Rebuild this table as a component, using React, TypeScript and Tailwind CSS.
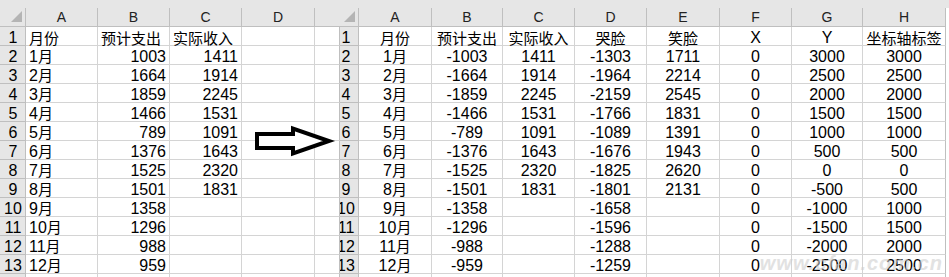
import type { ReactNode } from "react";

type Align = "l" | "r" | "c";

const months = ["1月", "2月", "3月", "4月", "5月", "6月", "7月", "8月", "9月", "10月", "11月", "12月"];
const plan = [1003, 1664, 1859, 1466, 789, 1376, 1525, 1501, 1358, 1296, 988, 959];
const actual = [1411, 1914, 2245, 1531, 1091, 1643, 2320, 1831];
const cry = [-1303, -1964, -2159, -1766, -1089, -1676, -1825, -1801, -1658, -1596, -1288, -1259];
const smile = [1711, 2214, 2545, 1831, 1391, 1943, 2620, 2131];
const ys = [3000, 2500, 2000, 1500, 1000, 500, 0, -500, -1000, -1500, -2000, -2500];

const cellFont =
  "font-['Liberation_Sans_Narrow','Liberation_Sans','Noto_Sans_CJK_SC',sans-serif] text-[16px] leading-[14px] text-black";

const Cell = ({
  children,
  align = "l",
  last = false,
}: {
  children?: ReactNode;
  align?: Align;
  last?: boolean;
}) => {
  const justify =
    align === "r" ? "justify-end pr-[3px]" : align === "c" ? "justify-center" : "justify-start pl-[3px]";
  return (
    <div
      className={`flex h-[19px] items-end whitespace-nowrap border-b border-[#d4d4d4] ${
        last ? "border-r border-r-[#bfbfbf]" : "border-r"
      } ${justify} ${cellFont}`}
    >
      {children}
    </div>
  );
};

const Cjk = ({ children }: { children: ReactNode }) => (
  <span className="font-['Noto_Sans_CJK_SC',sans-serif] text-[15px] leading-[14px]">{children}</span>
);

// "1月" -> number part in narrow face, 月 in CJK face
const Month = ({ m }: { m: string }) => (
  <span>
    {m.slice(0, -1)}
    <Cjk>月</Cjk>
  </span>
);

const RowHead = ({ n, cropped = false }: { n: number | string; cropped?: boolean }) => (
  <div className="flex h-[19px] items-end overflow-hidden border-b border-r border-[#bfbfbf] bg-[#e6e6e6]">
    <div
      className={`flex w-[26px] shrink-0 justify-center text-[#222] ${cellFont} ${
        cropped ? "-ml-[7px]" : ""
      }`}
    >
      {n}
    </div>
  </div>
);

const ColHead = ({ label, border = true }: { label?: string; border?: boolean }) => (
  <div
    className={`flex h-[19px] items-center justify-center border-b border-[#bfbfbf] bg-[#e6e6e6] pt-[1px] font-['Liberation_Sans',sans-serif] text-[14px] text-[#222] ${
      border ? "border-r" : ""
    }`}
  >
    {label}
  </div>
);

const Corner = () => (
  <div className="flex h-[19px] items-end justify-end border-b border-r border-[#bfbfbf] bg-[#e6e6e6] pb-[4px] pr-[3px]">
    <svg width="11" height="11" viewBox="0 0 11 11">
      <polygon points="11,0 11,11 0,11" fill="#b4b4b4" />
    </svg>
  </div>
);

const Arrow = () => (
  <svg
    className="absolute left-[252px] top-[124px]"
    width="84"
    height="36"
    viewBox="252 124 84 36"
  >
    <polygon
      points="257,134 293,134 293,128.5 329,141 293,153.5 293,148 257,148"
      fill="white"
      stroke="black"
      strokeWidth="4"
      strokeLinejoin="miter"
    />
  </svg>
);

const fmt = (v?: number) => (v === undefined ? "" : String(v));

export default function App() {
  const rows = Array.from({ length: 13 }, (_, i) => i);

  return (
    <div className="relative h-[277px] w-[949px] overflow-hidden bg-white">
      <div className="h-[8px] bg-[#e6e6e6]" />
      <div className="grid grid-cols-[26px_72px_72px_72px_73px_25px_19px_73px_71px_72px_72px_73px_72px_71px_83px_3px]">
        {/* column letters */}
        <Corner />
        <ColHead label="A" />
        <ColHead label="B" />
        <ColHead label="C" />
        <ColHead label="D" />
        <ColHead border={false} />
        <Corner />
        {["A", "B", "C", "D", "E", "F", "G", "H"].map((c) => (
          <ColHead key={c} label={c} />
        ))}
        <div />

        {/* row 1: headings */}
        <RowHead n={1} />
        <Cell>
          <Cjk>月份</Cjk>
        </Cell>
        <Cell>
          <Cjk>预计支出</Cjk>
        </Cell>
        <Cell>
          <Cjk>实际收入</Cjk>
        </Cell>
        <Cell />
        <Cell last />
        <RowHead n={1} cropped />
        {["月份", "预计支出", "实际收入", "哭脸", "笑脸"].map((t) => (
          <Cell key={t} align="c">
            <Cjk>{t}</Cjk>
          </Cell>
        ))}
        <Cell align="c">X</Cell>
        <Cell align="c">Y</Cell>
        <Cell align="c" last>
          <Cjk>坐标轴标签</Cjk>
        </Cell>
        <div />

        {rows.map((i) => {
          const n = i + 2;
          const m = months[i];
          return [
            <RowHead key={`lh${n}`} n={n} />,
            <Cell key={`la${n}`}>{m && <Month m={m} />}</Cell>,
            <Cell key={`lb${n}`} align="r">
              {fmt(plan[i])}
            </Cell>,
            <Cell key={`lc${n}`} align="r">
              {fmt(actual[i])}
            </Cell>,
            <Cell key={`ld${n}`} />,
            <Cell key={`le${n}`} last />,
            <RowHead key={`rh${n}`} n={n} cropped />,
            <Cell key={`ra${n}`} align="c">
              {m && <Month m={m} />}
            </Cell>,
            <Cell key={`rb${n}`} align="c">
              {plan[i] !== undefined ? `-${plan[i]}` : ""}
            </Cell>,
            <Cell key={`rc${n}`} align="c">
              {fmt(actual[i])}
            </Cell>,
            <Cell key={`rd${n}`} align="c">
              {fmt(cry[i])}
            </Cell>,
            <Cell key={`re${n}`} align="c">
              {fmt(smile[i])}
            </Cell>,
            <Cell key={`rf${n}`} align="c">
              {m ? "0" : ""}
            </Cell>,
            <Cell key={`rg${n}`} align="c">
              {fmt(ys[i])}
            </Cell>,
            <Cell key={`rh2${n}`} align="c" last>
              {ys[i] !== undefined ? String(Math.abs(ys[i])) : ""}
            </Cell>,
            <div key={`pad${n}`} />,
          ];
        })}
      </div>

      <Arrow />

      <span className="pointer-events-none absolute right-[6px] top-[248px] font-['Liberation_Sans',sans-serif] text-[20px] font-bold italic tracking-[1px] text-[#cfcfcf] opacity-60">
        www.cfan.com.cn
      </span>
    </div>
  );
}
